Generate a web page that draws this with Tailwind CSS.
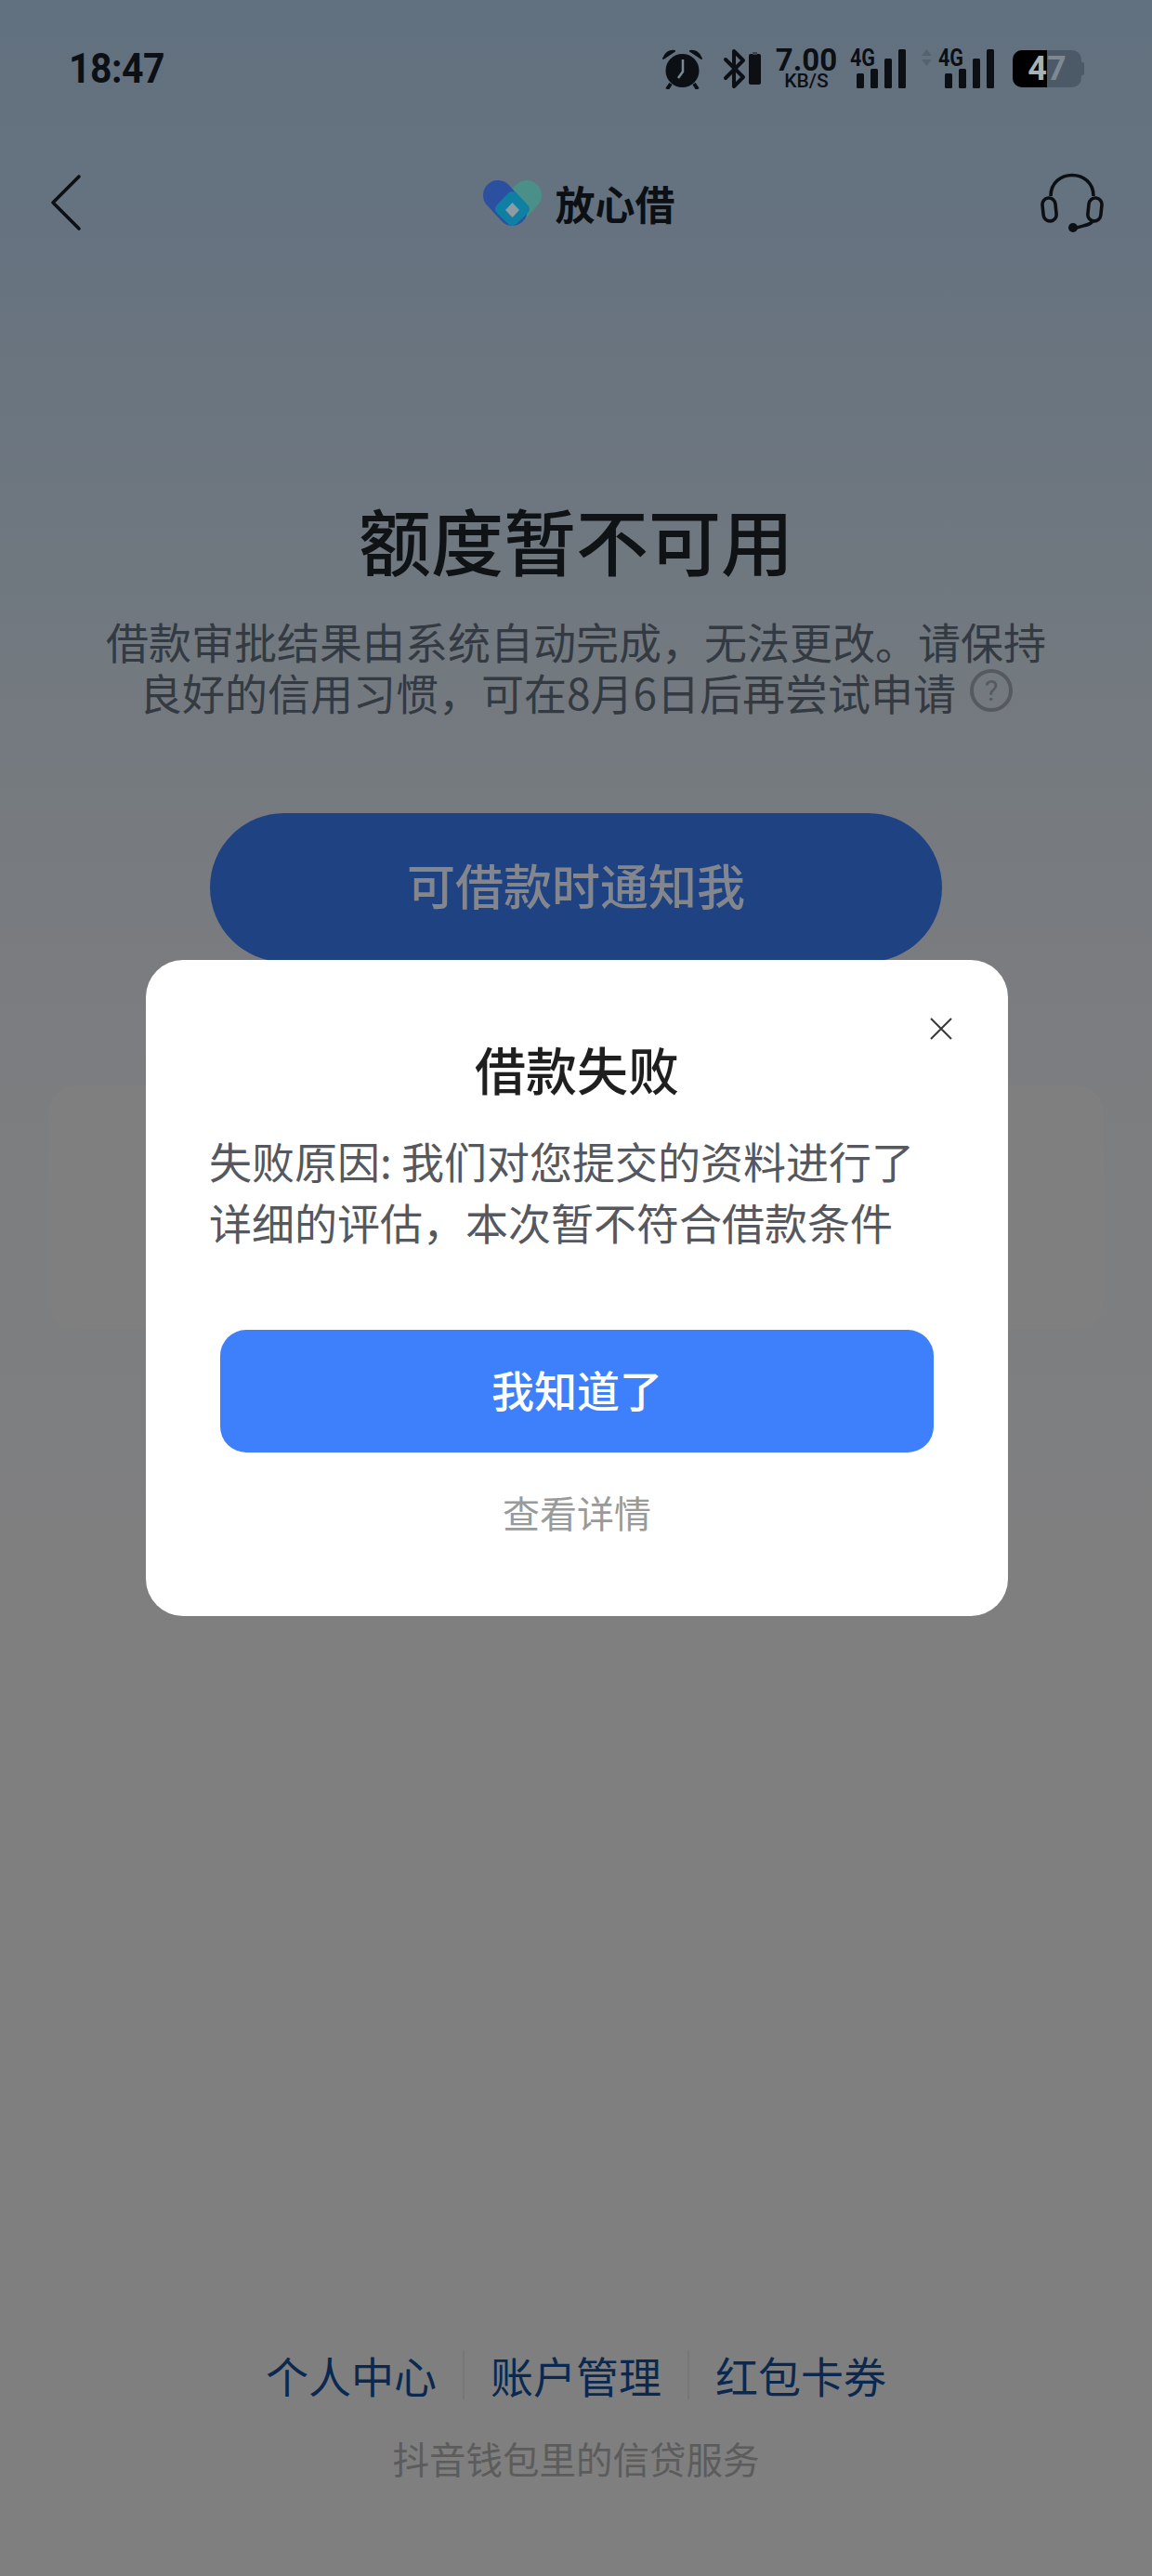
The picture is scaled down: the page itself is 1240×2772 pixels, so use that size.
<!DOCTYPE html>
<html lang="zh-CN">
<head>
  <meta charset="UTF-8" />
  <meta name="viewport" content="width=device-width, initial-scale=1.0"/>
  <title>放心借</title>
  <script src="https://cdn.jsdelivr.net/npm/@tailwindcss/browser@4"></script>
</head>
<body class="m-0">
  <div class="relative flex flex-col w-[1240px] h-[2772px] overflow-hidden bg-[linear-gradient(180deg,#62717f_0px,#67737f_300px,#72797f_700px,#7a7c7f_1050px,#7d7e7f_1300px,#7f7f7f_2000px)] font-['Noto_Sans_CJK_SC','Noto_Sans',sans-serif]">

    <!-- Status bar -->
    <div class="flex items-center h-[44px] mt-[52px] pl-[74px] pr-[73px] text-[#0c1014] font-['Roboto',sans-serif]">
      <span class="inline-block text-[41px] leading-none font-bold tracking-[-0.5px] scale-y-[1.08]">18:47</span>
      <svg class="ml-auto" width="43" height="44" viewBox="0 0 43 44">
        <circle cx="21.5" cy="24" r="18" fill="#0c1014"/>
        <path d="M1 11 C3 5 8 2 13 3 Z M42 11 C40 5 35 2 30 3 Z" fill="#0c1014" stroke="#0c1014" stroke-width="2" stroke-linejoin="round"/>
        <path d="M9 38 L5 44 M34 38 L38 44" stroke="#0c1014" stroke-width="4"/>
        <path d="M22 12 V25 L17 32" stroke="#7b8791" stroke-width="2.5" fill="none"/>
      </svg>
      <svg class="ml-[22px]" width="41" height="44" viewBox="0 0 41 44">
        <path d="M3 12 L22 31 L12 41 V3 L22 13 L3 32" stroke="#0c1014" stroke-width="4" fill="none" stroke-linejoin="round" stroke-linecap="round"/>
        <rect x="28" y="6" width="13" height="33" rx="2" fill="#0c1014"/>
        <rect x="32" y="4" width="5" height="3" fill="#3a444d"/>
      </svg>
      <div class="flex flex-col items-center ml-[16px] w-[66px]">
        <span class="text-[33px] leading-[26px] font-bold">7.00</span>
        <span class="text-[21px] leading-[18px] font-medium">KB/S</span>
      </div>
      <svg class="ml-[14px] overflow-visible" width="60" height="44" viewBox="0 0 60 44">
        <text x="0" y="19" font-family="Roboto" font-weight="700" font-size="25" textLength="27" lengthAdjust="spacingAndGlyphs" fill="#0c1014">4G</text>
        <rect x="7" y="27" width="8" height="16" rx="1.5" fill="#0c1014"/>
        <rect x="22" y="22" width="8" height="21" rx="1.5" fill="#0c1014"/>
        <rect x="37" y="11" width="8" height="32" rx="1.5" fill="#0c1014"/>
        <rect x="52" y="1" width="8" height="42" rx="1.5" fill="#0c1014"/>
      </svg>
      <svg class="ml-[17px]" width="11" height="44" viewBox="0 0 11 44">
        <path d="M5.5 1 L11 8 H0 Z M5.5 19 L11 12 H0 Z" fill="#56636f"/>
      </svg>
      <svg class="ml-[7px] overflow-visible" width="60" height="44" viewBox="0 0 60 44">
        <text x="0" y="19" font-family="Roboto" font-weight="700" font-size="25" textLength="27" lengthAdjust="spacingAndGlyphs" fill="#0c1014">4G</text>
        <rect x="7" y="27" width="8" height="16" rx="1.5" fill="#0c1014"/>
        <rect x="22" y="22" width="8" height="21" rx="1.5" fill="#0c1014"/>
        <rect x="37" y="11" width="8" height="32" rx="1.5" fill="#0c1014"/>
        <rect x="52" y="1" width="8" height="42" rx="1.5" fill="#0c1014"/>
      </svg>
      <div class="flex items-center ml-[20px]">
        <div class="flex w-[74px] h-[40px] rounded-[10px] overflow-hidden bg-[#4c5a67] text-[36px] leading-[40px] font-bold">
          <div class="flex justify-end w-[37px] bg-black text-[#a9b0b6]">4</div>
          <div class="text-[#7d8892]">7</div>
        </div>
        <div class="w-[3px] h-[14px] rounded-r-[2px] bg-[#4c5a67]"></div>
      </div>
    </div>

    <!-- Nav -->
    <div class="grid grid-cols-[1fr_auto_1fr] items-center h-[64px] mt-[90px] px-[52px]">
      <svg class="ml-[2px]" width="34" height="62" viewBox="0 0 34 62">
        <path d="M31 3 L3 31 L31 59" stroke="#0c1014" stroke-width="3.6" fill="none" stroke-linecap="round" stroke-linejoin="round"/>
      </svg>
      <div class="flex items-center pl-[6px]">
        <svg width="63" height="49" viewBox="0 0 63 49">
          <path d="M47 16 L31.5 33" stroke="#4a8f88" stroke-width="32" stroke-linecap="round"/>
          <path d="M16 16 L31.5 33" stroke="#2c50a0" stroke-width="32" stroke-linecap="round"/>
          <path d="M31.5 18 L44 31 L31.5 43 L19 31 Z" fill="#0f80a3" stroke="#0f80a3" stroke-width="12" stroke-linejoin="round"/>
          <path d="M31.5 24 L39 32 L31.5 40 L24 32 Z" fill="#8f9aa3"/>
        </svg>
        <span class="ml-[15px] text-[43px] leading-none font-bold text-[#0c1014]">放心借</span>
      </div>
      <svg class="justify-self-end" width="68" height="64" viewBox="0 0 68 64">
        <path d="M11 25 C11 -5 57 -5 57 25" stroke="#0c1014" stroke-width="3.6" fill="none"/>
        <rect x="2.5" y="27" width="14" height="25" rx="7" transform="rotate(-6 9 39)" stroke="#0c1014" stroke-width="3.6" fill="none"/>
        <rect x="51.5" y="27" width="14" height="25" rx="7" transform="rotate(6 59 39)" stroke="#0c1014" stroke-width="3.6" fill="none"/>
        <path d="M56 52 C54 56 48 56 36 60" stroke="#0c1014" stroke-width="3.6" fill="none"/>
        <circle cx="35" cy="59" r="5" fill="#0c1014"/>
      </svg>
    </div>

    <!-- Result -->
    <div class="flex flex-col items-center mt-[284px]">
      <h1 class="text-[78px] leading-[92px] font-medium text-[#0f1316]">额度暂不可用</h1>
      <p class="mt-[36px] text-[46px] leading-[55px] text-center text-[#343a42]">
        借款审批结果由系统自动完成，无法更改。请保持<br>
        良好的信用习惯，可在8月6日后再尝试申请<span class="inline-flex items-center justify-center align-top w-[46px] h-[46px] mt-[3px] ml-[15px] rounded-full border-[4px] border-[#565a60] text-[31px] leading-none text-[#565a60] font-['Roboto',sans-serif]">?</span>
      </p>
      <button class="w-[788px] h-[160px] mt-[103px] pb-[6px] rounded-full bg-[#1f4283] text-[52px] font-medium text-[#83878d]">可借款时通知我</button>
      <!-- card dimmed behind the dialog -->
      <div class="w-[1136px] h-[262px] mt-[133px] rounded-[30px] bg-[#7f7f7f]"></div>
    </div>

    <!-- Footer links -->
    <div class="flex flex-col items-center mt-auto pb-[103px]">
      <div class="flex items-center gap-[28px] text-[46px] leading-[54px] text-[#0b2950]">
        <span>个人中心</span>
        <div class="w-[2px] h-[53px] bg-[#777777]"></div>
        <span>账户管理</span>
        <div class="w-[2px] h-[53px] bg-[#777777]"></div>
        <span>红包卡券</span>
      </div>
      <p class="mt-[39px] text-[39.5px] leading-[48px] text-[#5c5c5c]">抖音钱包里的信贷服务</p>
    </div>

    <!-- Dialog -->
    <div class="absolute left-[157px] top-[1033px] flex flex-col w-[928px] h-[706px] pt-[84px] rounded-[40px] bg-white">
      <svg class="absolute left-[844px] top-[62px]" width="24" height="24" viewBox="0 0 24 24">
        <path d="M1 1 L23 23 M23 1 L1 23" stroke="#3a3a3a" stroke-width="2"/>
      </svg>
      <h2 class="text-[55px] leading-[64px] font-medium text-center text-[#1f1f1f]">借款失败</h2>
      <p class="mt-[34px] px-[68px] text-[46px] leading-[66px] text-[#55585f]">失败原因: 我们对您提交的资料进行了<br>详细的评估，本次暂不符合借款条件</p>
      <button class="mt-[84px] mx-[80px] h-[132px] pb-[6px] rounded-[28px] bg-[#3e7ffc] text-[46px] font-medium text-white">我知道了</button>
      <a class="mt-[36px] text-[40px] leading-[56px] text-center text-[#9a9a9a]">查看详情</a>
    </div>
  </div>
</body>
</html>
